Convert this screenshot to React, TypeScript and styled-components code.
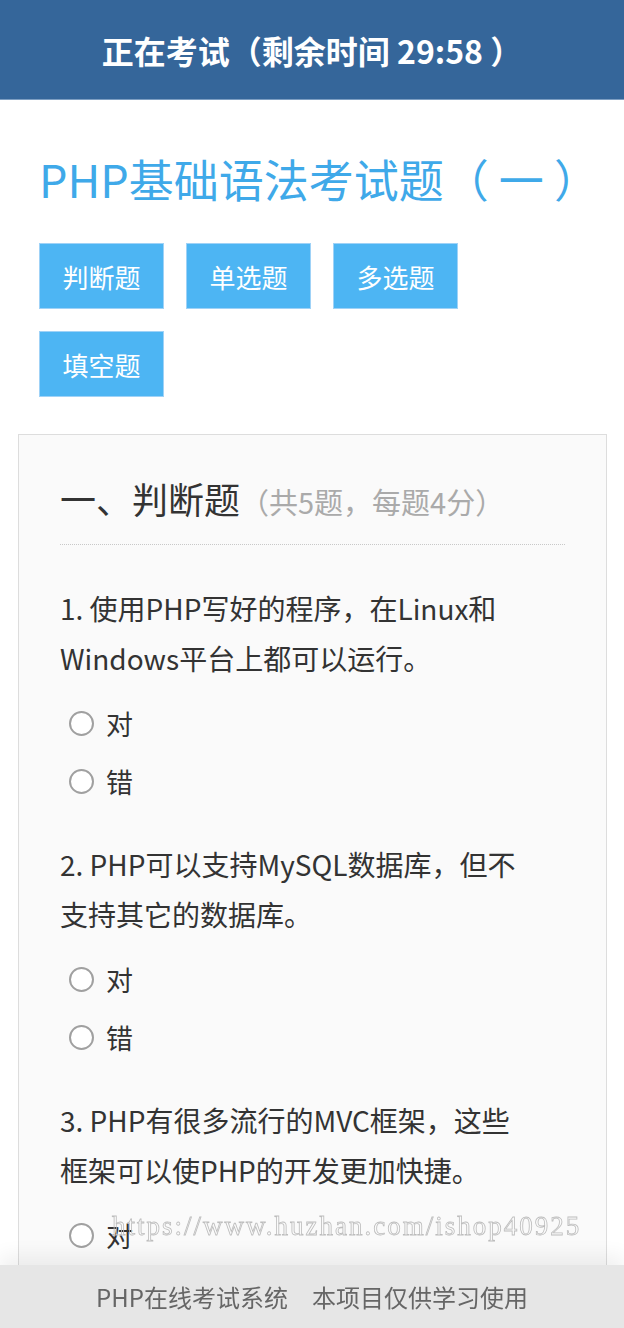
import styled, { createGlobalStyle } from "styled-components";

const GlobalStyle = createGlobalStyle`
  html, body {
    margin: 0;
    padding: 0;
    background: #ffffff;
    font-family: "Noto Sans CJK SC", "Noto Sans", sans-serif;
  }
  * { box-sizing: border-box; }
`;

type Question = { no: number; text: string; options: string[] };

const questions: Question[] = [
  { no: 1, text: "使用PHP写好的程序，在Linux和Windows平台上都可以运行。", options: ["对", "错"] },
  { no: 2, text: "PHP可以支持MySQL数据库，但不支持其它的数据库。", options: ["对", "错"] },
  { no: 3, text: "PHP有很多流行的MVC框架，这些框架可以使PHP的开发更加快捷。", options: ["对", "错"] },
  { no: 4, text: "PHP中的变量名区分大小写。", options: ["对", "错"] },
  { no: 5, text: "PHP是一种在服务器端执行的脚本语言。", options: ["对", "错"] },
];

const tabs = ["判断题", "单选题", "多选题", "填空题"];

export default function App() {
  return (
    <Page>
      <GlobalStyle />
      <Header>正在考试（剩余时间 29:58 ）</Header>
      <Title>PHP基础语法考试题（ 一 ）</Title>
      <Tabs>
        {tabs.map((t) => (
          <Tab key={t}>{t}</Tab>
        ))}
      </Tabs>
      <Card>
        <SectionTitle>
          一、判断题<SectionNote>（共5题，每题4分）</SectionNote>
        </SectionTitle>
        {questions.map((q) => (
          <QuestionBlock key={q.no}>
            <QuestionText>
              {q.no}. {q.text}
            </QuestionText>
            {q.options.map((o) => (
              <Option key={o}>
                <Radio />
                {o}
              </Option>
            ))}
          </QuestionBlock>
        ))}
      </Card>
      <Watermark>https://www.huzhan.com/ishop40925</Watermark>
      <Footer>PHP在线考试系统　本项目仅供学习使用</Footer>
    </Page>
  );
}

const Page = styled.div`
  padding-bottom: 90px;
`;

const Header = styled.div`
  height: 100px;
  background: #35669a;
  border-bottom: 1px solid #7d9ec2;
  color: #ffffff;
  font-size: 32px;
  font-weight: 700;
  display: flex;
  align-items: center;
  justify-content: center;
`;

const Title = styled.h1`
  margin: 49px 0 0 39px;
  color: #3fa9e9;
  font-size: 45px;
  font-weight: 400;
  line-height: 60px;
`;

const Tabs = styled.div`
  display: flex;
  flex-wrap: wrap;
  gap: 22px;
  margin: 34px 39px 0;
`;

const Tab = styled.div`
  width: 125px;
  height: 66px;
  background: #4db5f3;
  border: 1px solid #9fd2f7;
  color: #ffffff;
  font-size: 26px;
  display: flex;
  align-items: center;
  justify-content: center;
`;

const Card = styled.div`
  margin: 37px 17px 0 18px;
  background: #fafafa;
  border: 1px solid #dddddd;
  padding: 39px 41px 30px 41px;
`;

const SectionTitle = styled.h2`
  margin: 0;
  padding-bottom: 19px;
  border-bottom: 1px dotted #c8c8c8;
  color: #333333;
  font-size: 36px;
  font-weight: 400;
  line-height: 48px;
`;

const SectionNote = styled.span`
  color: #aaaaaa;
  font-size: 29px;
`;

const QuestionBlock = styled.div`
  margin-top: 29px;
  &:first-of-type {
    margin-top: 38px;
  }
`;

const QuestionText = styled.div`
  max-width: 474px;
  color: #333333;
  font-size: 28px;
  line-height: 50px;
  margin-bottom: 11px;
`;

const Option = styled.div`
  display: flex;
  align-items: center;
  gap: 12px;
  height: 58px;
  padding-left: 9px;
  color: #333333;
  font-size: 27px;
`;

const Radio = styled.span`
  width: 25px;
  height: 25px;
  border-radius: 50%;
  border: 2px solid #a0a0a0;
  background: #ffffff;
`;

const Watermark = styled.div`
  position: fixed;
  left: 112px;
  bottom: 86px;
  font-family: "Liberation Serif", "DejaVu Serif", serif;
  font-size: 27px;
  letter-spacing: 2px;
  color: transparent;
  -webkit-text-stroke: 0.8px #bdbdbd;
  pointer-events: none;
`;

const Footer = styled.div`
  position: fixed;
  left: 0;
  right: 0;
  bottom: 0;
  height: 63px;
  background: #e6e6e6;
  box-shadow: 0 -10px 18px rgba(0, 0, 0, 0.06);
  color: #666666;
  font-size: 24px;
  display: flex;
  align-items: center;
  justify-content: center;
`;
